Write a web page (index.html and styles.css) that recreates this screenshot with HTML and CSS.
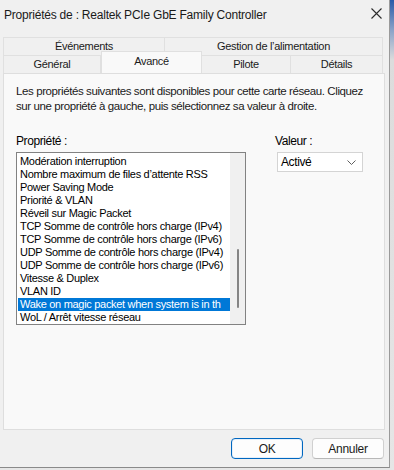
FILE: index.html
```html
<!DOCTYPE html>
<html lang="fr">
<head>
    <meta charset="UTF-8">
    <meta name="viewport" content="width=device-width, initial-scale=1.0">
    <title>Propriétés de : Realtek PCIe GbE Family Controller</title>
    <link rel="stylesheet" href="styles.css">
</head>
<body>
    <div class="fenetre">
        <!-- Barre de titre -->
        <div class="titre">
            <span class="titre-texte">Propriétés de : Realtek PCIe GbE Family Controller</span>
            <svg class="fermer" width="11" height="11" viewBox="0 0 11 11">
                <path d="M0.5 0.5 L10.5 10.5 M10.5 0.5 L0.5 10.5" stroke="#2b2b2b" stroke-width="1.1" fill="none"/>
            </svg>
        </div>

        <!-- Onglets -->
        <div class="onglets">
            <div class="rangee">
                <div class="onglet o-evt">Événements</div>
                <div class="onglet o-gest">Gestion de l’alimentation</div>
            </div>
            <div class="rangee">
                <div class="onglet o-gen">Général</div>
                <div class="onglet o-av actif">Avancé</div>
                <div class="onglet o-pil">Pilote</div>
                <div class="onglet o-det">Détails</div>
            </div>
        </div>

        <!-- Contenu de l'onglet -->
        <div class="panneau">
            <p class="intro">Les propriétés suivantes sont disponibles pour cette carte réseau. Cliquez sur une propriété à gauche, puis sélectionnez sa valeur à droite.</p>

            <div class="champs">
                <div class="col-propriete">
                    <div class="etiquette">Propriété :</div>
                    <div class="liste">
                        <ul class="elements">
                            <li>Modération interruption</li>
                            <li>Nombre maximum de files d’attente RSS</li>
                            <li>Power Saving Mode</li>
                            <li>Priorité &amp; VLAN</li>
                            <li>Réveil sur Magic Packet</li>
                            <li>TCP Somme de contrôle hors charge (IPv4)</li>
                            <li>TCP Somme de contrôle hors charge (IPv6)</li>
                            <li>UDP Somme de contrôle hors charge (IPv4)</li>
                            <li>UDP Somme de contrôle hors charge (IPv6)</li>
                            <li>Vitesse &amp; Duplex</li>
                            <li>VLAN ID</li>
                            <li class="choisi">Wake on magic packet when system is in th</li>
                            <li>WoL / Arrêt vitesse réseau</li>
                        </ul>
                        <div class="defilement"><div class="curseur"></div></div>
                    </div>
                </div>
                <div class="col-valeur">
                    <div class="etiquette">Valeur :</div>
                    <div class="selecteur">
                        <span>Activé</span>
                        <svg width="9" height="5" viewBox="0 0 9 5">
                            <path d="M0.5 0.5 L4.5 4.5 L8.5 0.5" stroke="#5f5f5f" stroke-width="1" fill="none"/>
                        </svg>
                    </div>
                </div>
            </div>
        </div>

        <!-- Boutons -->
        <div class="boutons">
            <button class="bouton defaut">OK</button>
            <button class="bouton">Annuler</button>
        </div>
    </div>
</body>
</html>
```

FILE: styles.css
```css
/* Page : fond du bureau derrière la fenêtre */
body {
    margin: 0;
    width: 394px;
    height: 470px;
    background: linear-gradient(#2a5aa8 0, #8aa2c8 30px, #dcdcdc 60px, #e6e6e6 100%);
    font-family: "Liberation Sans", Arial, sans-serif;
    font-size: 12px;
    letter-spacing: -0.4px;
    color: #000;
    overflow: hidden;
}

/* Fenêtre de dialogue */
.fenetre {
    width: 389px;
    height: 467px;
    background: #f0f0f0;
    border-right: 1px solid #9a9a9a;
    border-bottom: 1px solid #8a8a8a;
    display: flex;
    flex-direction: column;
}

/* Barre de titre */
.titre {
    height: 30px;
    display: flex;
    align-items: center;
    justify-content: space-between;
    padding: 0 7px 0 4px;
}

.titre-texte {
    font-size: 12px;
    letter-spacing: -0.22px;
    color: #1a1a1a;
}

.fermer {
    margin-top: -4px;
}

/* Onglets */
.onglets {
    margin: 7px 0 0 3px;
    position: relative;
    z-index: 1;
}

.rangee {
    display: flex;
    height: 18px;
}

.onglet {
    box-sizing: border-box;
    height: 18px;
    background: #f0f0f0;
    border: 1px solid #e0e0e0;
    border-bottom: none;
    text-align: center;
    line-height: 17px;
    font-size: 11px;
    letter-spacing: -0.3px;
    color: #1a1a1a;
}

.o-evt { width: 162px; }
.o-gest { width: 218px; border-left: none; }
.o-gen { width: 98px; }
.o-av { width: 101px; }
.o-pil { width: 89px; }
.o-det { width: 92px; }

.onglet.actif {
    background: #f9f9f9;
    height: 22px;
    margin-top: -4px;
    line-height: 19px;
    border-color: #e0e0e0;
}

.o-pil, .o-det { border-left: none; }

/* Panneau de l'onglet actif */
.panneau {
    box-sizing: border-box;
    width: 382px;
    height: 357px;
    margin-left: 3px;
    background: #f9f9f9;
    border: 1px solid #dedede;
    padding: 10px 12px 0 12px;
}

.intro {
    margin: 0;
    line-height: 15px;
    width: 356px;
    font-size: 11.5px;
    letter-spacing: -0.4px;
    color: #1a1a1a;
}

.champs {
    display: flex;
    margin-top: 20px;
}

.etiquette {
    height: 15px;
    line-height: 15px;
    margin-bottom: 3px;
}

/* Liste des propriétés */
.col-propriete {
    width: 230px;
}

.liste {
    box-sizing: border-box;
    width: 230px;
    height: 173px;
    background: #fff;
    border: 1px solid #828282;
    display: flex;
}

.elements {
    list-style: none;
    margin: 0;
    padding: 2px 0 0 1px;
    flex: 1;
    overflow: hidden;
}

.elements li {
    height: 13px;
    line-height: 13px;
    padding-left: 2px;
    white-space: nowrap;
    overflow: hidden;
    font-size: 11px;
    letter-spacing: -0.3px;
}

.elements li.choisi {
    background: #0078d7;
    color: #fff;
}

.defilement {
    width: 15px;
    background: #f0f0f0;
    display: flex;
    justify-content: center;
    align-items: flex-end;
    padding-bottom: 16px;
}

.curseur {
    width: 2px;
    height: 59px;
    background: #858585;
    border-radius: 1px;
}

/* Valeur */
.col-valeur {
    margin-left: 29px;
}

.selecteur {
    box-sizing: border-box;
    width: 86px;
    height: 20px;
    margin-left: 2px;
    background: #fff;
    border: 1px solid #d4d4d4;
    display: flex;
    align-items: center;
    justify-content: space-between;
    padding: 0 6px 0 3px;
}

/* Boutons du bas */
.boutons {
    display: flex;
    justify-content: flex-end;
    gap: 9px;
    padding: 8px 5px 0 0;
}

.bouton {
    box-sizing: border-box;
    width: 72px;
    height: 21px;
    font-family: "Liberation Sans", Arial, sans-serif;
    font-size: 12px;
    letter-spacing: -0.3px;
    color: #1a1a1a;
    background: #fdfdfd;
    border: 1px solid #d0d0d0;
    border-bottom-color: #b8b8b8;
    border-radius: 4px;
    padding: 0;
}

.bouton.defaut {
    border: 1px solid #0067c0;
    box-shadow: inset 0 0 0 1px #e6f0fa;
}
```
